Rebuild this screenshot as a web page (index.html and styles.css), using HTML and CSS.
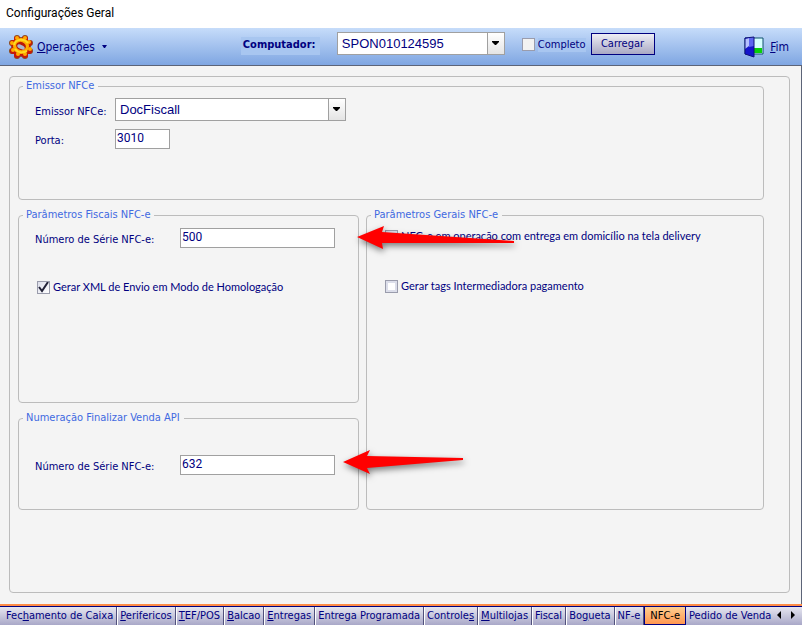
FILE: index.html
```
<!DOCTYPE html>
<html lang="pt-BR">
<head>
    <meta charset="UTF-8">
    <meta name="viewport" content="width=device-width, initial-scale=1.0">
    <title>Configurações Geral</title>
    <link rel="stylesheet" href="styles.css">
</head>
<body>
    <header class="titlebar">
        <h1>Configurações Geral</h1>
    </header>

    <div class="toolbar">
        <button class="tool" type="button">
            <svg class="gear" width="26" height="26" viewBox="0 0 26 26">
                <g fill="#8c4a20">
                    <circle cx="13" cy="13" r="10"/>
                    <circle cx="9" cy="4" r="3"/><circle cx="17" cy="4" r="3"/>
                    <circle cx="22" cy="9" r="3"/><circle cx="22" cy="17" r="3"/>
                    <circle cx="17" cy="22" r="3"/><circle cx="9" cy="22" r="3"/>
                    <circle cx="4" cy="17" r="3"/><circle cx="4" cy="9" r="3"/>
                </g>
                <g fill="#c81808">
                    <circle cx="13" cy="13" r="9"/>
                    <circle cx="9" cy="5" r="3"/><circle cx="17" cy="5" r="3"/>
                    <circle cx="21" cy="9" r="3"/><circle cx="21" cy="17" r="3"/>
                    <circle cx="17" cy="21" r="3"/><circle cx="9" cy="21" r="3"/>
                    <circle cx="5" cy="17" r="3"/><circle cx="5" cy="9" r="3"/>
                </g>
                <g fill="#ffac00">
                    <circle cx="13" cy="12" r="8"/>
                    <circle cx="9" cy="4" r="2"/><circle cx="17" cy="4" r="2"/>
                    <circle cx="21" cy="8" r="2"/><circle cx="22" cy="15" r="2"/>
                    <circle cx="17" cy="20" r="2"/><circle cx="10" cy="20" r="2"/>
                    <circle cx="5" cy="16" r="2"/><circle cx="4" cy="9" r="2"/>
                </g>
                <path d="M6 11c1-6 10-7 14-2M7 15c3 4 8 4 12 2" fill="none" stroke="#ffdc20" stroke-width="2"/>
                <ellipse cx="13" cy="12" rx="5" ry="4" transform="rotate(20 13 12)" fill="#b81808"/>
                <ellipse cx="13" cy="13" rx="4" ry="2" transform="rotate(25 13 13)" fill="#a9b9cc"/>
            </svg>
            <span><u>O</u>perações</span>
            <svg class="caret" width="5" height="3" viewBox="0 0 5 3"><path d="M0 0h5L3 3H2z" fill="#000080"/></svg>
        </button>

        <div class="computer">
            <label class="computer-label" for="computador">Computador:</label>
            <span class="combo combo-computer">
                <select id="computador"><option>SPON010124595</option></select>
                <svg class="combo-arrow" width="7" height="4" viewBox="0 0 7 4"><path d="M0 0h7v1L4 4H3L0 1z"/></svg>
            </span>
            <label class="check check-flat"><input type="checkbox"><span>Completo</span></label>
            <button class="load" type="button">Carregar</button>
        </div>

        <button class="tool exit" type="button">
            <svg width="20" height="22" viewBox="0 0 20 22">
                <path d="M1 2h18v16H1z" fill="#d6ffff" stroke="#10506c"/>
                <path d="M10 12h8v5h-8z" fill="#08d008"/>
                <path d="M1 2h9v19L1 18z" fill="#1414cc"/>
                <path d="M1 3l4-1v8l-4 3z" fill="#b4c0ff"/>
                <path d="M5 2l5-1v9l-5 1z" fill="#5c64f0"/>
                <path d="M1 2l9-1v20l-9-3z" fill="none" stroke="#10107c"/>
            </svg>
            <span><u>F</u>im</span>
        </button>
    </div>

    <main class="page">
        <div class="panel">
            <fieldset class="group group-issuer">
                <legend>Emissor NFCe</legend>
                <div class="field">
                    <label for="emissor">Emissor NFCe:</label>
                    <span class="combo combo-issuer">
                        <select id="emissor"><option>DocFiscall</option></select>
                        <svg class="combo-arrow" width="7" height="4" viewBox="0 0 7 4"><path d="M0 0h7v1L4 4H3L0 1z"/></svg>
                    </span>
                </div>
                <div class="field">
                    <label for="porta">Porta:</label>
                    <input class="text short" id="porta" type="text" value="3010">
                </div>
            </fieldset>

            <fieldset class="group group-fiscal">
                <legend>Parâmetros Fiscais NFC-e</legend>
                <div class="field wide">
                    <label for="serie">Número de Série NFC-e:</label>
                    <span class="pointed">
                        <input class="text" id="serie" type="text" value="500">
                        <svg class="arrow" width="190" height="36" viewBox="0 0 190 36">
                            <path d="M22 14L49 3L47 9L179 18V20L47 20L48 26z"/>
                        </svg>
                    </span>
                </div>
                <label class="check"><input type="checkbox" checked><span>Gerar XML de Envio em Modo de Homologação</span></label>
            </fieldset>

            <fieldset class="group group-general">
                <legend>Parâmetros Gerais NFC-e</legend>
                <label class="check"><input type="checkbox"><span>NFC-e em operação com entrega em domicílio na tela delivery</span></label>
                <label class="check"><input type="checkbox"><span>Gerar tags Intermediadora pagamento</span></label>
            </fieldset>

            <fieldset class="group group-api">
                <legend>Numeração Finalizar Venda API</legend>
                <div class="field wide">
                    <label for="serie-api">Número de Série NFC-e:</label>
                    <span class="pointed">
                        <input class="text" id="serie-api" type="text" value="632">
                        <svg class="arrow" width="190" height="36" viewBox="0 0 190 36">
                            <path d="M8 12L35 0L32 6L128 8V10L32 18L35 24z"/>
                        </svg>
                    </span>
                </div>
            </fieldset>
        </div>
    </main>

    <nav class="tabs">
        <button type="button">Fec<u>h</u>amento de Caixa</button>
        <button type="button"><u>P</u>erifericos</button>
        <button type="button"><u>T</u>EF/POS</button>
        <button type="button"><u>B</u>alcao</button>
        <button type="button"><u>E</u>ntregas</button>
        <button type="button">Entrega Programada</button>
        <button type="button">Controle<u>s</u></button>
        <button type="button"><u>M</u>ultilojas</button>
        <button type="button">Fiscal</button>
        <button type="button">Bo<u>g</u>ueta</button>
        <button type="button">NF-e</button>
        <button type="button" class="active">NFC-e</button>
        <button type="button">Pedido de Venda</button>
        <span class="scroll">
            <button type="button" aria-label="Anterior"><svg width="4" height="8" viewBox="0 0 4 8"><path d="M4 0v8L0 4z"/></svg></button>
            <button type="button" aria-label="Próximo"><svg width="4" height="8" viewBox="0 0 4 8"><path d="M0 0v8l4-4z"/></svg></button>
        </span>
    </nav>
</body>
</html>
```
FILE: styles.css
```
* {
    box-sizing: border-box;
    margin: 0;
    padding: 0;
}

body {
    min-height: 100vh;
    display: flex;
    flex-direction: column;
    background: #f4f4f4;
    color: #000080;
    font-family: "DejaVu Sans Condensed", "DejaVu Sans", Tahoma, sans-serif;
    font-size: 11px;
    line-height: 14px;
}

button, input, select {
    font: inherit;
    color: inherit;
}

button {
    background: none;
    border: none;
    white-space: nowrap;
}

.titlebar {
    height: 28px;
    padding: 4px 6px;
    background: #fff;
    color: #000;
}

.titlebar h1 {
    font-family: Roboto, "Segoe UI", sans-serif;
    font-size: 12px;
    font-weight: normal;
    line-height: 18px;
}

/* toolbar */
.toolbar {
    display: flex;
    align-items: center;
    height: 38px;
    padding: 0 13px 0 8px;
    background: linear-gradient(#c6dcfa, #7fa6e2);
    border-bottom: 1px solid #5c6478;
}

.tool {
    display: flex;
    align-items: center;
    gap: 3px;
    font-size: 12px;
}

.caret {
    margin-left: 4px;
}

.computer {
    display: flex;
    align-items: center;
    margin-left: 134px;
    padding-bottom: 6px;
}

.computer-label {
    width: 79px;
    padding: 1px 2px 3px;
    margin: 4px 17px 0 0;
    background: #a8c6f0;
    font-weight: bold;
}

.combo {
    position: relative;
    display: flex;
    height: 23px;
}

.combo select {
    appearance: none;
    width: 100%;
    padding: 0 20px 0 4px;
    border: 1px solid #a0a0a0;
    border-radius: 0;
    background: linear-gradient(90deg, #a0a0a0 1px, transparent 1px) right / 17px 100% no-repeat,
        linear-gradient(#fff, #e4e4e4) right / 17px 100% no-repeat, #fff;
    font-family: "Liberation Sans", Arial, sans-serif;
    font-size: 13px;
}

.combo-arrow {
    position: absolute;
    right: 6px;
    top: 9px;
    pointer-events: none;
}

.combo-computer {
    width: 168px;
}

.combo-issuer {
    width: 231px;
}

.load {
    width: 64px;
    height: 22px;
    margin-left: 5px;
    border: 1px solid #000080;
    background: linear-gradient(#eeeef4, #a9a8c4);
}

.exit {
    margin-left: auto;
    gap: 6px;
}

/* checkboxes */
.check {
    display: flex;
    align-items: center;
    gap: 3px;
    font-family: Lato, Tahoma, sans-serif;
    white-space: nowrap;
}

.check input {
    appearance: none;
    flex: none;
    width: 13px;
    height: 13px;
    border: 1px solid #9a9cac;
    background: #fff;
    box-shadow: inset 0 0 0 2px #dcdeea;
}

.check input:checked {
    background: url("data:image/svg+xml,%3Csvg xmlns='http://www.w3.org/2000/svg' viewBox='0 0 11 11'%3E%3Cpath d='M1 5l3 4L10 0' fill='none' stroke='%23222238' stroke-width='2'/%3E%3C/svg%3E"), linear-gradient(135deg, #dcdeea, #fff);
    box-shadow: none;
}

.check-flat {
    margin: 2px 0 0 17px;
    font-family: inherit;
}

.check-flat input {
    background: #f2f2f2;
    box-shadow: none;
}

.check-flat span {
    background: #a8c6f0;
}

/* page */
.page {
    flex: 1;
    display: flex;
    padding: 10px 11px 11px 9px;
    border-right: 1px solid #5c6478;
}

.panel {
    flex: 1;
    display: grid;
    grid-template-columns: 341fr 398fr;
    grid-template-rows: minmax(121px, auto) minmax(195px, auto) minmax(99px, auto);
    align-content: start;
    gap: 8px 7px;
    padding: 2px 25px 8px 8px;
    border: 1px solid #bcbcbc;
    border-radius: 4px;
}

.group {
    min-width: 0;
    padding: 0 4px;
    border: 1px solid #bcbcbc;
    border-radius: 4px;
}

.group legend {
    padding: 0 4px 0 3px;
    color: #4169e1;
}

.group-issuer {
    grid-column: 1 / 3;
}

.group-issuer .field:first-of-type {
    margin: 5px 0 8px;
}

.group-fiscal .field {
    margin: 6px 0 32px;
}

.group-fiscal .check {
    margin-left: 14px;
}

.group-general {
    grid-column: 2;
    grid-row: 2 / 4;
}

.group-general .check {
    margin: 7px 0 36px 14px;
}

.group-api .field {
    margin-top: 30px;
}

.field {
    display: grid;
    grid-template-columns: 80px auto;
    justify-content: start;
    align-items: center;
    padding-left: 12px;
}

.field label {
    padding-top: 4px;
}

.wide {
    grid-template-columns: 145px 155px;
}

.text {
    width: 100%;
    height: 20px;
    padding: 0 1px 3px;
    border: 1px solid #a0a0a0;
    background: #fff;
    font-family: Roboto, Tahoma, sans-serif;
    font-size: 12px;
}

.short {
    width: 55px;
}

/* arrows that point at the series fields */
.pointed {
    position: relative;
    display: flex;
}

.arrow {
    position: absolute;
    z-index: 1;
    left: 100%;
    top: -5px;
    fill: #f00;
    overflow: visible;
    pointer-events: none;
    filter: drop-shadow(1px 3px 3px rgba(0, 0, 0, 0.5));
}

/* bottom tabs */
.tabs {
    display: flex;
    height: 21px;
    padding-left: 3px;
    border-top: 2px solid #ff8c46;
    background: linear-gradient(#000080 1px, #e6e6f0 1px, #a9a8c8);
}

.tabs > button {
    margin-top: 1px;
    padding: 0 3px;
    border-right: 1px solid #50507c;
    box-shadow: 1px 0 #fff;
}

.tabs .active {
    margin-top: 0;
    padding: 0 5px;
    border: 1px solid #000080;
    background: linear-gradient(#ffcf90, #ff9650);
    box-shadow: none;
    color: #000;
}

.tabs .active + button {
    border: none;
    box-shadow: none;
}

.scroll {
    display: flex;
    align-items: center;
    gap: 10px;
    margin-left: auto;
    padding-right: 7px;
}
```
